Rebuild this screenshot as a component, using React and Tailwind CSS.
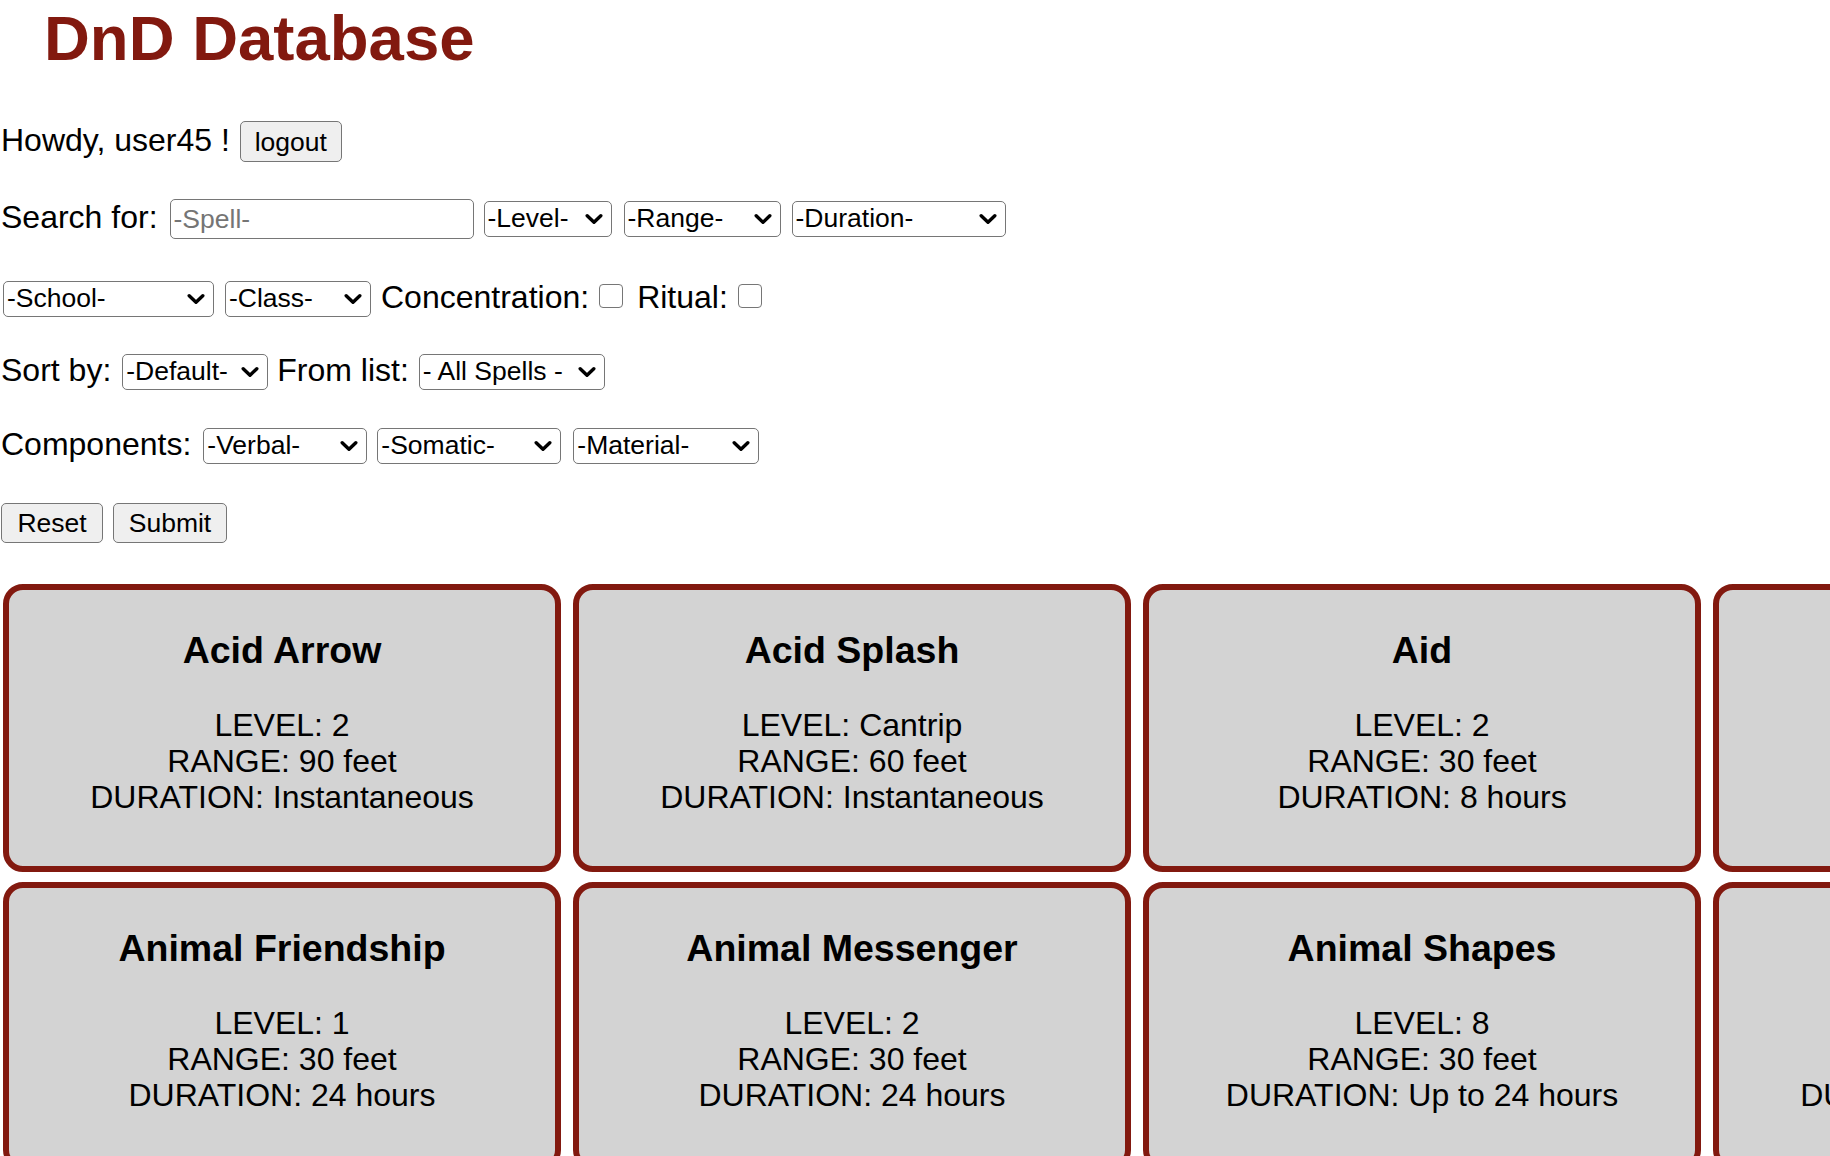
const SPELLS = [
  { name: 'Acid Arrow', level: '2', range: '90 feet', duration: 'Instantaneous' },
  { name: 'Acid Splash', level: 'Cantrip', range: '60 feet', duration: 'Instantaneous' },
  { name: 'Aid', level: '2', range: '30 feet', duration: '8 hours' },
  { name: 'Alarm', level: '1', range: '30 feet', duration: '8 hours' },
  { name: 'Alter Self', level: '2', range: 'Self', duration: 'Up to 1 hour' },
  { name: 'Animal Friendship', level: '1', range: '30 feet', duration: '24 hours' },
  { name: 'Animal Messenger', level: '2', range: '30 feet', duration: '24 hours' },
  { name: 'Animal Shapes', level: '8', range: '30 feet', duration: 'Up to 24 hours' },
  { name: 'Animate Dead', level: '3', range: '10 feet', duration: 'Instantaneous' },
  { name: 'Animate Objects', level: '5', range: '120 feet', duration: 'Up to 1 minute' },
]

function Label({ children, className = '' }) {
  return <span className={`mb-[4px] shrink-0 text-[32px] leading-[36px] ${className}`}>{children}</span>
}

function Select({ children, className = '' }) {
  return (
    <span className={`relative flex h-[36px] shrink-0 ${className}`}>
      <select className="h-full w-full appearance-none rounded-[5px] border-[1.75px] border-[#767676] bg-white pb-[2px] pl-[3px] pr-[30px] text-[26.5px] leading-[28px] text-black outline-none">
        <option>{children}</option>
      </select>
      {/* chrome-style chevron */}
      <svg className="pointer-events-none absolute right-[9px] top-1/2 -translate-y-1/2" width="18" height="11" viewBox="0 0 18 11">
        <path d="M2.2 2.2l6.8 6.6 6.8-6.6" fill="none" stroke="#000" strokeWidth="3.4" strokeLinecap="round" strokeLinejoin="round" />
      </svg>
    </span>
  )
}

function Checkbox({ className = '' }) {
  return (
    <input
      type="checkbox"
      className={`mb-[7px] h-[24px] w-[24px] shrink-0 appearance-none rounded-[4px] border-[1.75px] border-[#767676] bg-white ${className}`}
    />
  )
}

function Button({ children, className = '' }) {
  return (
    <button className={`flex shrink-0 items-center justify-center rounded-[5px] border-[1.75px] border-[#767676] bg-[#efefef] text-[26.5px] leading-[30px] text-black ${className}`}>
      {children}
    </button>
  )
}

function SpellCard({ spell }) {
  return (
    <div className="h-[288px] w-[558px] rounded-[20px] border-[6px] border-[#82190f] bg-[#d3d3d3] text-center text-black">
      <h3 className="mt-[39px] text-[37.5px] font-bold leading-[42px]">{spell.name}</h3>
      <div className="mt-[36px] text-[32px] leading-[36px]">
        <div>LEVEL: {spell.level}</div>
        <div>RANGE: {spell.range}</div>
        <div>DURATION: {spell.duration}</div>
      </div>
    </div>
  )
}

export default function App() {
  return (
    <div className="min-h-screen bg-white font-['Liberation_Sans',Arial,sans-serif] text-black">
      <h1 className="ml-[44px] mt-[1px] text-[63.5px] font-bold leading-[74px] text-[#82190f]">DnD Database</h1>

      <div className="pl-[1px]">
        <div className="mt-[46px] flex h-[41px] items-center">
          <Label>Howdy, user45 !</Label>
          <Button className="ml-[10px] h-[41px] w-[102px]">logout</Button>
        </div>

        <div className="mt-[37px] flex h-[40px] items-center">
          <Label>Search for:</Label>
          <input
            placeholder="-Spell-"
            className="ml-[12px] h-[40px] w-[304px] shrink-0 rounded-[5px] border-[1.75px] border-[#767676] bg-white pl-[3px] text-[26.5px] outline-none placeholder:text-[#757575]"
          />
          <Select className="ml-[10px] w-[128px]">-Level-</Select>
          <Select className="ml-[12px] w-[157px]">-Range-</Select>
          <Select className="ml-[11px] w-[214px]">-Duration-</Select>
        </div>

        <div className="mt-[42px] flex h-[36px] items-center">
          <Select className="ml-[2px] w-[211px]">-School-</Select>
          <Select className="ml-[11px] w-[146px]">-Class-</Select>
          <Label className="ml-[10px]">Concentration:</Label>
          <Checkbox className="ml-[10px]" />
          <Label className="ml-[14px]">Ritual:</Label>
          <Checkbox className="ml-[10px]" />
        </div>

        <div className="mt-[37px] flex h-[36px] items-center">
          <Label>Sort by:</Label>
          <Select className="ml-[11px] w-[146px]">-Default-</Select>
          <Label className="ml-[9px]">From list:</Label>
          <Select className="ml-[10px] w-[186px]">- All Spells -</Select>
        </div>

        <div className="mt-[38px] flex h-[36px] items-center">
          <Label>Components:</Label>
          <Select className="ml-[12px] w-[164px]">-Verbal-</Select>
          <Select className="ml-[10px] w-[184px]">-Somatic-</Select>
          <Select className="ml-[12px] w-[186px]">-Material-</Select>
        </div>

        <div className="mt-[39px] flex h-[40px] items-center">
          <Button className="h-[40px] w-[102px]">Reset</Button>
          <Button className="ml-[10px] h-[40px] w-[114px]">Submit</Button>
        </div>
      </div>

      <div className="mt-[41px] grid w-max grid-cols-[repeat(5,558px)] gap-x-[12px] gap-y-[10px] pl-[3px]">
        {SPELLS.map((s) => (
          <SpellCard key={s.name} spell={s} />
        ))}
      </div>
    </div>
  )
}
